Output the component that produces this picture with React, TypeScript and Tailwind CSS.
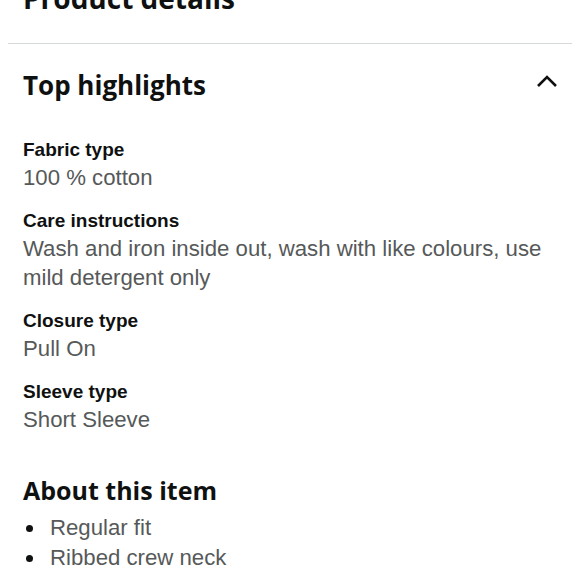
import React from 'react';

const highlights = [
  { label: 'Fabric type', value: '100 % cotton' },
  { label: 'Care instructions', value: 'Wash and iron inside out, wash with like colours, use mild detergent only' },
  { label: 'Closure type', value: 'Pull On' },
  { label: 'Sleeve type', value: 'Short Sleeve' },
];

const about = ['Regular fit', 'Ribbed crew neck', '100% Cotton'];

const headingFont = "font-['Open_Sans',sans-serif]";

export default function App() {
  return (
    <div className="h-[580px] w-[580px] overflow-hidden bg-white font-['Liberation_Sans',Arial,sans-serif] text-[#0f1111]">
      <div className="px-[23px]">
        <h1 className={`${headingFont} -mt-[18px] text-[28px] font-bold leading-[32px]`}>
          Product details
        </h1>
      </div>

      <div className="mx-2 mt-[29px] h-px bg-[#d5d9d9]" />

      <div className="px-[23px] pt-[25px]">
        <div className="flex items-center justify-between">
          <h2 className={`${headingFont} text-[26px] font-bold leading-[32px]`}>Top highlights</h2>
          <svg width="22" height="14" viewBox="0 0 22 14" className="-mr-[1px] mt-[-8px]">
            <polyline points="2,12 11,3 20,12" fill="none" stroke="#0f1111" strokeWidth="2.6" />
          </svg>
        </div>

        <div className="mt-[35px] flex flex-col gap-[15px]">
          {highlights.map((h) => (
            <div key={h.label}>
              <div className="text-[19px] font-bold leading-[27px]">{h.label}</div>
              <div className="text-[22.2px] leading-[29px] text-[#565959]">{h.value}</div>
            </div>
          ))}
        </div>

        <h2 className={`${headingFont} mt-[40px] text-[25px] font-bold leading-[32px]`}>About this item</h2>

        <ul className="mt-[7px]">
          {about.map((item) => (
            <li key={item} className="flex items-center text-[22.2px] leading-[30px] text-[#565959]">
              <span className="ml-[3px] mr-[17px] h-[7px] w-[7px] rounded-full bg-[#0f1111]" />
              {item}
            </li>
          ))}
        </ul>
      </div>
    </div>
  );
}
